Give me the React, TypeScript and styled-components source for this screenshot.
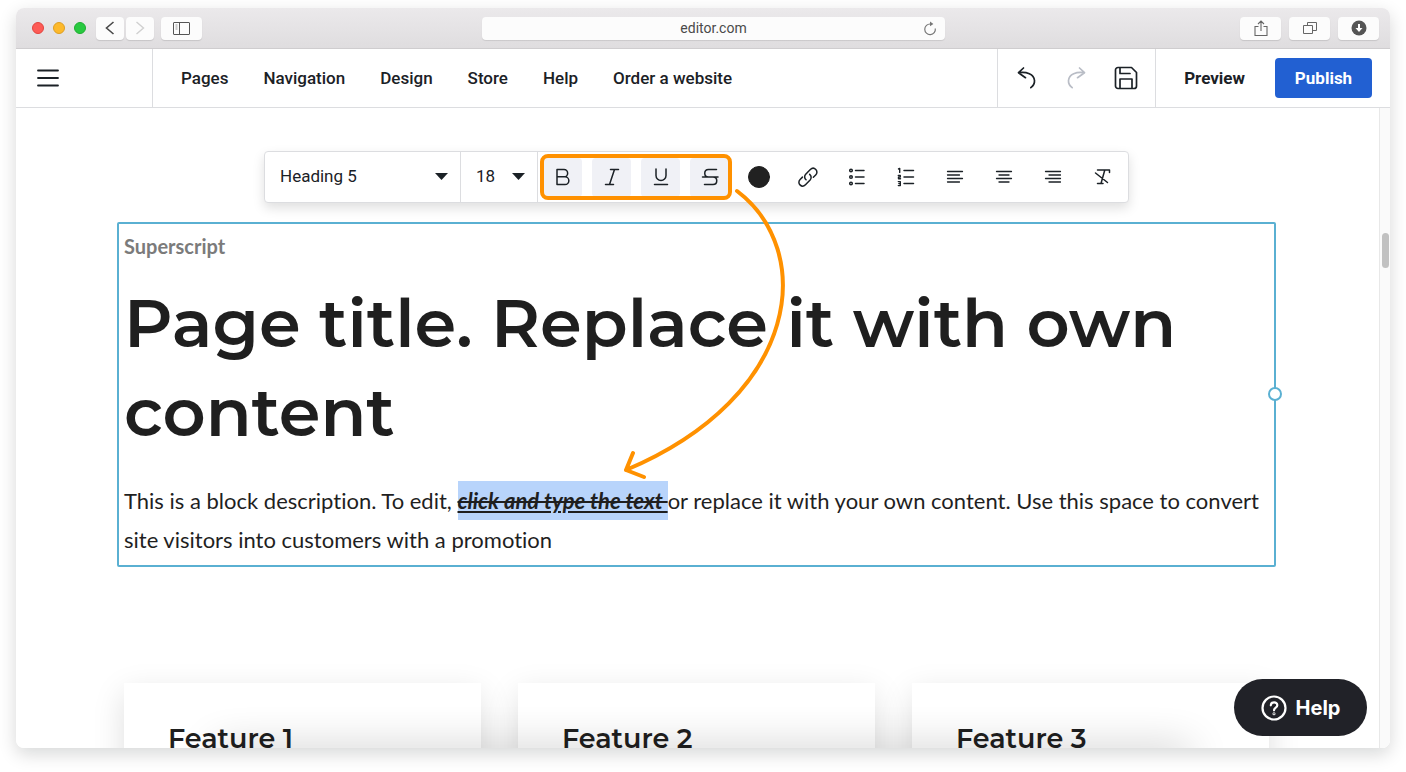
import React from "react";
import styled, { createGlobalStyle } from "styled-components";

const ink = "#1b2126";
const line = "#dcdde0";
const accent = "#5ab0d2";
const orange = "#ff9100";

const GlobalStyle = createGlobalStyle`
  * { box-sizing: border-box; }
  body { margin: 0; background: #fff; color: ${ink}; font-family: Roboto, "Liberation Sans", sans-serif; }
  button, input, select { font: inherit; color: inherit; border: 0; padding: 0; margin: 0; background: none; }
  button { cursor: pointer; }
  svg { display: block; }
`;

const Page = styled.div`
  height: 100vh;
  min-height: 480px;
  padding: 8px 16px 24px;
`;

const WindowShadow = styled.div`
  height: 100%;
  border-radius: 8px;
  box-shadow: 0 6px 18px rgba(0, 15, 10, 0.16);
`;

const BrowserWindow = styled.div`
  position: relative;
  height: 100%;
  display: flex;
  flex-direction: column;
  border-radius: 8px;
  overflow: hidden;
  background: #fff;

  &::after {
    content: "";
    position: absolute;
    left: 200px;
    right: 200px;
    bottom: -20px;
    height: 20px;
    box-shadow: 0 0 40px rgba(0, 0, 0, 0.24);
    pointer-events: none;
  }
`;

const TitleBar = styled.div`
  flex: none;
  height: 41px;
  display: grid;
  grid-template-columns: 450fr 463fr 434fr;
  align-items: center;
  padding: 0 11px 0 16px;
  background: linear-gradient(#ebe9eb, #dfdddf);
  border-bottom: 1px solid #cfcdcf;
`;

const BarGroup = styled.div<{ $end?: boolean }>`
  display: flex;
  align-items: center;
  justify-content: ${(p) => (p.$end ? "flex-end" : "flex-start")};
  gap: ${(p) => (p.$end ? 8 : 0)}px;
`;

const Lights = styled.div`
  display: flex;
  gap: 9px;
  margin-right: 10px;
`;

const Light = styled.button<{ $color: string; $edge: string }>`
  width: 12px;
  height: 12px;
  border-radius: 50%;
  background: ${(p) => p.$color};
  border: 1px solid ${(p) => p.$edge};
`;

const History = styled.div`
  display: flex;
  gap: 2px;
  margin-right: 7px;
`;

const ChromeButton = styled.button<{ $narrow?: boolean }>`
  width: ${(p) => (p.$narrow ? 28 : 41)}px;
  height: 23px;
  border-radius: 4px;
  background: #fcfcfc;
  box-shadow: 0 1px 1px rgba(0, 0, 0, 0.12);
  display: grid;
  place-items: center;
`;

const Address = styled.label`
  height: 23px;
  display: flex;
  align-items: center;
  border-radius: 4px;
  background: #fcfcfc;
  box-shadow: 0 1px 1px rgba(0, 0, 0, 0.1);
  padding: 0 7px 0 23px;
`;

const AddressInput = styled.input`
  flex: 1;
  min-width: 0;
  text-align: center;
  font-size: 14px;
  color: #4a4a4a;
  outline: none;
`;

const Header = styled.header`
  flex: none;
  height: 59px;
  display: flex;
  align-items: stretch;
  border-bottom: 1px solid ${line};
  font-size: 17px;
`;

const MenuCell = styled.div`
  width: 137px;
  padding-left: 21px;
  display: flex;
  align-items: center;
  border-right: 1px solid ${line};
`;

const Nav = styled.nav`
  flex: 1;
  display: flex;
  align-items: center;
  gap: 35px;
  padding-left: 28px;
`;

const NavLink = styled.a`
  color: ${ink};
  font-weight: 500;
  text-decoration: none;
  white-space: nowrap;
`;

const HistoryCell = styled.div`
  display: flex;
  align-items: center;
  gap: 26px;
  padding: 0 17px 0 16px;
  border-left: 1px solid ${line};
  border-right: 1px solid ${line};
`;

const PlainButton = styled.button<{ $muted?: boolean }>`
  display: grid;
  place-items: center;
  color: ${(p) => (p.$muted ? "#b9bdc6" : "inherit")};
`;

const ActionCell = styled.div`
  display: flex;
  align-items: center;
  gap: 30px;
  padding: 0 18px 0 28px;
`;

const Preview = styled.button`
  font-weight: 700;
`;

const Publish = styled.button`
  width: 97px;
  height: 40px;
  border-radius: 4px;
  background: #2260d2;
  color: #fff;
  font-weight: 700;
`;

const Body = styled.div`
  flex: 1;
  min-height: 0;
  display: flex;
`;

const Canvas = styled.main`
  flex: 1;
  min-width: 0;
  padding: 43px 103px 0 101px;
  overflow: hidden;
`;

const ScrollTrack = styled.div`
  width: 11px;
  flex: none;
  background: #fafafa;
  border-left: 1px solid #e8e8e8;
  padding: 125px 1px 0 2px;
`;

const ScrollThumb = styled.div`
  height: 35px;
  border-radius: 4px;
  background: #c1c1c1;
`;

const Toolbar = styled.div`
  width: max-content;
  height: 52px;
  margin: 0 auto 19px;
  display: flex;
  border: 1px solid ${line};
  border-radius: 4px;
  background: #fff;
  box-shadow: 0 5px 12px rgba(0, 0, 0, 0.13);
`;

const Picker = styled.label<{ $width: number }>`
  position: relative;
  width: ${(p) => p.$width}px;
  border-right: 1px solid ${line};
  font-size: 17px;
`;

const PickerSelect = styled.select`
  appearance: none;
  width: 100%;
  height: 100%;
  padding: 0 0 2px 15px;
  outline: none;
`;

const Caret = styled.svg`
  position: absolute;
  right: 12px;
  top: 50%;
  margin-top: -4px;
  pointer-events: none;
`;

const Tools = styled.div`
  position: relative;
  z-index: 2;
  display: flex;
  align-items: center;
  gap: 10px;
  padding: 0 7px 0 5px;
`;

const Tool = styled.button<{ $active?: boolean }>`
  width: 39px;
  height: 39px;
  border-radius: 4px;
  display: grid;
  place-items: center;
  background: ${(p) => (p.$active ? "#f0f1f6" : "transparent")};
`;

const Highlight = styled.div`
  position: absolute;
  left: 2px;
  top: 2px;
  width: 192px;
  height: 46px;
  border: 4px solid ${orange};
  border-radius: 8px;
  pointer-events: none;
`;

const Arrow = styled.svg`
  position: absolute;
  left: 80px;
  top: 30px;
  pointer-events: none;
`;

const TextBlock = styled.section`
  position: relative;
  border: 2px solid ${accent};
  border-radius: 2px;
  padding: 9px 5px 6px;
  color: #1f1f1f;
`;

const ResizeHandle = styled.div`
  position: absolute;
  right: -8px;
  top: 50%;
  width: 14px;
  height: 14px;
  margin-top: -8px;
  border: 2px solid ${accent};
  border-radius: 50%;
  background: #fff;
`;

const Superscript = styled.p`
  margin: 0 0 20px;
  font: 700 20px/26px Lato, sans-serif;
  color: #7b7b7b;
`;

const Title = styled.h1`
  margin: 0 0 24px;
  font: 600 67px/89px Montserrat, Inter, sans-serif;
`;

const Description = styled.p`
  margin: 0;
  font: 400 22px/39px Lato, sans-serif;
  font-variant-ligatures: none;
`;

const Selected = styled.span`
  background: #b8d4fb;
  padding: 6px 0;
  font-weight: 700;
  font-style: italic;
  text-decoration: underline line-through;
`;

const Cards = styled.div`
  display: grid;
  grid-template-columns: repeat(3, 1fr);
  gap: 37px;
  padding: 0 7px;
  margin-top: 116px;
`;

const Card = styled.article`
  height: 320px;
  padding: 38px 44px;
  background: #fff;
  box-shadow: 0 10px 30px rgba(0, 0, 0, 0.13);
`;

const CardTitle = styled.h2`
  margin: 0;
  font: 600 27px/36px Montserrat, Inter, sans-serif;
  color: #1f1f1f;
`;

const HelpButton = styled.button`
  position: absolute;
  z-index: 3;
  right: 23px;
  bottom: 12px;
  width: 133px;
  height: 57px;
  border-radius: 29px;
  background: #212228;
  color: #fff;
  display: flex;
  align-items: center;
  justify-content: center;
  gap: 9px;
  font: 700 20px/24px Inter, sans-serif;
`;

const Icon = ({ size = 24, width = 1.5, children }: { size?: number; width?: number; children: React.ReactNode }) => (
  <svg width={size} height={size} viewBox={`0 0 ${size} ${size}`} fill="none" stroke="currentColor" strokeWidth={width} strokeLinecap="round" strokeLinejoin="round">
    {children}
  </svg>
);

const linkIcon = (
  <g transform="translate(-1.9 -1.8) scale(1.16)" strokeWidth="1.300">
    <path d="M10.300 14.300c-1.500-1.300-1.600-3.300-.3-4.700l4-4.100c1.400-1.400 3.400-1.400 4.700-.1s1.300 3.300-.1 4.700l-2 2" />
    <path d="M13.400 9.600c1.600 1.400 1.700 3.500.4 4.900l-4 4.100c-1.400 1.400-3.400 1.400-4.700.1s-1.300-3.300.1-4.700l2-2" />
  </g>
);

const tools: { name: string; active?: boolean; icon: React.ReactNode }[] = [
  { name: "Bold", active: true, icon: <path d="M6 4.500h7a3.600 3.600 0 0 1 0 7.300H6zM6 11.800h8a3.800 3.800 0 0 1 0 7.700H6z" /> },
  { name: "Italic", active: true, icon: <path d="M10.500 4.500h8M5.500 19.500h8M14.500 4.500l-5 15" /> },
  { name: "Underline", active: true, icon: <path d="M7 4v6.500a5 5 0 0 0 10 0V4M5.500 19.500h13" /> },
  { name: "Strikethrough", active: true, icon: <path d="M18.500 4.500H10.500c-5 0-5 7.500 0 7.500M4.500 12h15.500M15 12c5 0 5 7.500 0 7.500H6.500" /> },
  { name: "Text colour", icon: <circle cx="12" cy="12" r="10.500" fill="#212121" stroke="#212121" strokeWidth="1" /> },
  { name: "Link", icon: linkIcon },
  {
    name: "Bulleted list",
    icon: (
      <>
        <circle cx="6" cy="5.500" r="1.300" />
        <circle cx="6" cy="12" r="1.300" />
        <circle cx="6" cy="18.500" r="1.300" />
        <path d="M10.500 5.500h8.500M10.500 12h8.500M10.500 18.500h8.500" />
      </>
    ),
  },
  {
    name: "Numbered list",
    icon: (
      <>
        <path d="M10 5.500h9.500M10 12h9.500M10 18.500h9.500" />
        <path d="M4.500 4l1.200-.6v4M4.300 10.400h2v1.600h-1.800v1.700h2M4.300 16.600h2v4h-2M4.800 18.600h1.500" strokeWidth="1.400" />
      </>
    ),
  },
  { name: "Align left", icon: <path d="M4.500 6.500h15M4.500 10h12M4.500 13.500h15M4.500 17h12" strokeWidth="1.300" /> },
  { name: "Align center", icon: <path d="M4.500 6.500h15M7 10h10M4.500 13.500h15M7 17h10" strokeWidth="1.300" /> },
  { name: "Align right", icon: <path d="M4.500 6.500h15M8 10h11.500M4.500 13.500h15M8 17h11.500" strokeWidth="1.300" /> },
  { name: "Clear formatting", icon: <path d="M7.500 5h12v2.500M14.800 5l-3.800 13.500M7.500 18.500h5.500M5.500 8L17.500 17.500" /> },
];

const ToolPicker = ({ label, width, value }: { label: string; width: number; value: string }) => (
  <Picker $width={width}>
    <PickerSelect aria-label={label} defaultValue={value}>
      <option>{value}</option>
    </PickerSelect>
    <Caret width="13" height="7" viewBox="0 0 13 7">
      <path d="M0 0h13L6.500 7z" fill={ink} />
    </Caret>
  </Picker>
);

const navItems = ["Pages", "Navigation", "Design", "Store", "Help", "Order a website"];
const features = ["Feature 1", "Feature 2", "Feature 3"];

export default function App() {
  return (
    <Page>
      <GlobalStyle />
      <WindowShadow>
        <BrowserWindow>
          <TitleBar>
            <BarGroup>
              <Lights>
                <Light aria-label="Close" $color="#fd5b56" $edge="#e2443f" />
                <Light aria-label="Minimize" $color="#fdb92b" $edge="#dd9f24" />
                <Light aria-label="Zoom" $color="#28c940" $edge="#1eae31" />
              </Lights>
              <History>
                <ChromeButton $narrow aria-label="Back">
                  <svg width="10" height="14" viewBox="0 0 10 14" fill="none" stroke="#4a4a4a" strokeWidth="1.600"><path d="M8.500 1L1.500 7l7 6" /></svg>
                </ChromeButton>
                <ChromeButton $narrow aria-label="Forward">
                  <svg width="10" height="14" viewBox="0 0 10 14" fill="none" stroke="#d0d0d0" strokeWidth="1.400"><path d="M1.500 1l7 6-7 6" /></svg>
                </ChromeButton>
              </History>
              <ChromeButton aria-label="Sidebar">
                <svg width="17" height="13" viewBox="0 0 17 13" fill="none" stroke="#555"><rect x=".5" y=".5" width="16" height="12" rx=".5" /><path d="M6.500 0v13" /><path d="M2.500 3h2M2.500 5h2M2.500 7h2" stroke="#999" /></svg>
              </ChromeButton>
            </BarGroup>
            <Address>
              <AddressInput aria-label="Address" defaultValue="editor.com" />
              <PlainButton aria-label="Reload">
                <svg width="16" height="16" viewBox="0 0 16 16" fill="none" stroke="#777" strokeWidth="1.200"><path d="M8.500 4A5.300 5.300 0 1 0 13.300 8.500" /><path d="M8 1.600L11.400 4 8 6.200z" fill="#777" stroke="none" /></svg>
              </PlainButton>
            </Address>
            <BarGroup $end>
              <ChromeButton aria-label="Share">
                <svg width="14" height="17" viewBox="0 0 14 17" fill="none" stroke="#666" strokeWidth="1.100"><path d="M4.500 6.500H1v9h12v-9H9.500M7 11V1.200M4 4l3-3 3 3" /></svg>
              </ChromeButton>
              <ChromeButton aria-label="Tabs">
                <svg width="14" height="14" viewBox="0 0 14 14" fill="none" stroke="#666"><path d="M.5 4.500h9v8h-9zM4.500 4V1.500h9v8H10" /></svg>
              </ChromeButton>
              <ChromeButton aria-label="Downloads">
                <svg width="16" height="16" viewBox="0 0 16 16"><circle cx="8" cy="8" r="7.500" fill="#555" /><path d="M7 4h2v4h2.500L8 12 4.500 8H7z" fill="#fff" /></svg>
              </ChromeButton>
            </BarGroup>
          </TitleBar>
          <Header>
            <MenuCell>
              <PlainButton aria-label="Menu">
                <svg width="22" height="18" viewBox="0 0 22 18" stroke={ink} strokeWidth="1.800" strokeLinecap="round"><path d="M1 1.500h20M1 9h20M1 16.500h20" /></svg>
              </PlainButton>
            </MenuCell>
            <Nav>
              {navItems.map((item) => (
                <NavLink key={item} href="#">{item}</NavLink>
              ))}
            </Nav>
            <HistoryCell>
              <PlainButton aria-label="Undo">
                <Icon width={1.7}><path d="M9.500 2L4.500 6.700l7 5M4.500 6.700C12.500 5.500 20 8 20.500 14.500c.2 3-1.500 5.500-3.700 7.200" /></Icon>
              </PlainButton>
              <PlainButton aria-label="Redo" $muted>
                <Icon width={1.7}><path d="M15.500 2L20.500 6.700l-7 5M20.500 6.700C12.500 5.500 5 8 4.500 14.500c-.2 3 1.500 5.500 3.700 7.200" /></Icon>
              </PlainButton>
              <PlainButton aria-label="Save">
                <Icon width={1.7}><path d="M4 1.500h13.500l5 5V20a2.500 2.500 0 0 1-2.500 2.500H4A2.500 2.500 0 0 1 1.500 20V4A2.500 2.500 0 0 1 4 1.500zM6 1.500v6h10M6 22.500v-9.500h12v9.500" /></Icon>
              </PlainButton>
            </HistoryCell>
            <ActionCell>
              <Preview>Preview</Preview>
              <Publish>Publish</Publish>
            </ActionCell>
          </Header>
          <Body>
            <Canvas>
              <Toolbar>
                <ToolPicker label="Text style" width={196} value="Heading 5" />
                <ToolPicker label="Font size" width={77} value="18" />
                <Tools>
                  {tools.map((tool) => (
                    <Tool key={tool.name} $active={tool.active} aria-label={tool.name}>
                      <Icon>{tool.icon}</Icon>
                    </Tool>
                  ))}
                  <Highlight />
                  <Arrow width="175" height="305" viewBox="0 0 175 305" fill="none" stroke={orange} strokeWidth="4" strokeLinecap="round" strokeLinejoin="round">
                    <path d="M119 9C197 68 185 213 8 288M15 271L8 288l18 7" />
                  </Arrow>
                </Tools>
              </Toolbar>
              <TextBlock>
                <Superscript>Superscript</Superscript>
                <Title>Page title. Replace it with own content</Title>
                <Description>
                  This is a block description. To edit, <Selected>click and type the text </Selected>or replace it with your own content. Use this space to convert site visitors into customers with a promotion
                </Description>
                <ResizeHandle />
              </TextBlock>
              <Cards>
                {features.map((feature) => (
                  <Card key={feature}>
                    <CardTitle>{feature}</CardTitle>
                  </Card>
                ))}
              </Cards>
            </Canvas>
            <ScrollTrack>
              <ScrollThumb />
            </ScrollTrack>
          </Body>
          <HelpButton>
            <svg width="26" height="26" viewBox="0 0 26 26" fill="none" stroke="#fff" strokeWidth="2.200" strokeLinecap="round"><circle cx="13" cy="13" r="11.500" /><path d="M9.800 10.300c.2-4 6.600-3.800 6.500 0 0 2.500-3.300 2.300-3.300 5" /><circle cx="13" cy="18.800" r=".4" /></svg>
            Help
          </HelpButton>
        </BrowserWindow>
      </WindowShadow>
    </Page>
  );
}
